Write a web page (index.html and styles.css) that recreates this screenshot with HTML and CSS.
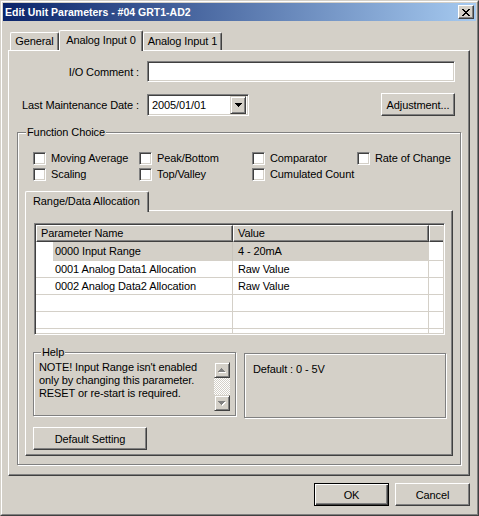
FILE: index.html
```html
<!DOCTYPE html>
<html>
<head>
<meta charset="utf-8">
<title>Edit Unit Parameters</title>
<link rel="stylesheet" href="styles.css">
</head>
<body>
<div class="window">
  <div class="frame">
    <div class="titlebar">
      <span class="title">Edit Unit Parameters - #04 GRT1-AD2</span>
      <span class="close"><svg width="8" height="7" viewBox="0 0 8 7"><path fill="#000" d="M0 0h2v1h-2z M6 0h2v1h-2z M1 1h2v1h-2z M5 1h2v1h-2z M2 2h4v1h-4z M3 3h2v1h-2z M2 4h4v1h-4z M1 5h2v1h-2z M5 5h2v1h-2z M0 6h2v1h-2z M6 6h2v1h-2z"/></svg></span>
    </div>
    <div class="client">
      <div class="tabs">
        <div class="tab t-general">General</div>
        <div class="tab active t-ai0">Analog Input 0</div>
        <div class="tab t-ai1">Analog Input 1</div>
      </div>
      <div class="panel">
        <div class="row row1">
          <span class="lbl">I/O Comment :</span>
          <div class="field comment"></div>
        </div>
        <div class="row row2">
          <span class="lbl">Last Maintenance Date :</span>
          <div class="field combo">
            <span class="combo-text">2005/01/01</span>
            <span class="dd"><svg width="7" height="4" viewBox="0 0 7 4"><path fill="#000" d="M0 0h7v1h-1v1h-1v1h-1v1h-1v-1h-1v-1h-1v-1h-1z"/></svg></span>
          </div>
          <div class="btn adj">Adjustment...</div>
        </div>
        <div class="group func">
          <span class="gtitle">Function Choice</span>
          <div class="checks">
            <div class="ck"><span class="cb"></span><span>Moving Average</span></div>
            <div class="ck"><span class="cb"></span><span>Peak/Bottom</span></div>
            <div class="ck"><span class="cb"></span><span>Comparator</span></div>
            <div class="ck"><span class="cb"></span><span>Rate of Change</span></div>
            <div class="ck"><span class="cb"></span><span>Scaling</span></div>
            <div class="ck"><span class="cb"></span><span>Top/Valley</span></div>
            <div class="ck"><span class="cb"></span><span>Cumulated Count</span></div>
          </div>
          <div class="subtabs">
            <div class="tab active subtab">Range/Data Allocation</div>
          </div>
          <div class="subpanel">
            <div class="field listview">
              <div class="lv-head">
                <div class="hc">Parameter Name</div>
                <div class="hc">Value</div>
                <div class="hc hc3"></div>
              </div>
              <div class="lv-row sel">
                <div class="c1">0000 Input Range</div>
                <div class="c2">4 - 20mA</div>
                <div class="c3"></div>
              </div>
              <div class="lv-row">
                <div class="c1">0001 Analog Data1 Allocation</div>
                <div class="c2">Raw Value</div>
                <div class="c3"></div>
              </div>
              <div class="lv-row">
                <div class="c1">0002 Analog Data2 Allocation</div>
                <div class="c2">Raw Value</div>
                <div class="c3"></div>
              </div>
              <div class="lv-row">
                <div class="c1"></div>
                <div class="c2"></div>
                <div class="c3"></div>
              </div>
              <div class="lv-row">
                <div class="c1"></div>
                <div class="c2"></div>
                <div class="c3"></div>
              </div>
              <div class="lv-row">
                <div class="c1"></div>
                <div class="c2"></div>
                <div class="c3"></div>
              </div>
            </div>
            <div class="bottom">
              <div class="group help">
                <span class="gtitle">Help</span>
                <div class="help-body">
                  <div class="help-text">NOTE! Input Range isn't enabled<br>only by changing this parameter.<br>RESET or re-start is required.</div>
                  <div class="sbar">
                    <span class="sbtn"><svg width="8" height="5" viewBox="0 0 8 5"><path fill="#fff" d="M4 1h1v1h1v1h1v1h1v1h-7v-1h1v-1h1v-1h1z"/><path fill="#808080" d="M3 0h1v1h1v1h1v1h1v1h-7v-1h1v-1h1v-1h1z"/></svg></span>
                    <span class="track"></span>
                    <span class="sbtn"><svg width="8" height="5" viewBox="0 0 8 5"><path fill="#fff" d="M1 1h7v1h-1v1h-1v1h-1v1h-1v-1h-1v-1h-1v-1h-1z"/><path fill="#808080" d="M0 0h7v1h-1v1h-1v1h-1v1h-1v-1h-1v-1h-1v-1h-1z"/></svg></span>
                  </div>
                </div>
              </div>
              <div class="defbox">Default : 0 - 5V</div>
            </div>
            <div class="btn defset">Default Setting</div>
          </div>
        </div>
      </div>
      <div class="actions">
        <div class="btn default">OK</div>
        <div class="btn">Cancel</div>
      </div>
    </div>
  </div>
</div>
</body>
</html>
```

FILE: styles.css
```css
* { box-sizing: border-box; }
html, body { margin: 0; padding: 0; }
body {
  background: #d4d0c8;
  font-family: "Liberation Sans", Arial, sans-serif;
  font-size: 11px;
  letter-spacing: -0.1px;
  color: #000;
}
.window {
  width: 479px;
  height: 516px;
  border: 1px solid;
  border-color: #d4d0c8 #404040 #404040 #d4d0c8;
  background: #d4d0c8;
}
.frame {
  height: 100%;
  border: 1px solid;
  border-color: #fff #808080 #808080 #fff;
  padding: 1px;
  display: flex;
  flex-direction: column;
}
.titlebar {
  height: 18px;
  flex: none;
  display: flex;
  align-items: center;
  padding: 0 2px 0 2px;
  background: linear-gradient(to right, #0a246a, #a6caf0);
}
.title {
  flex: 1;
  color: #fff;
  font-weight: bold;
  font-size: 10.5px;
  letter-spacing: 0;
  line-height: 18px;
  white-space: nowrap;
}
.close {
  width: 16px;
  height: 14px;
  display: flex;
  align-items: center;
  justify-content: center;
  background: #d4d0c8;
  border: 1px solid;
  border-color: #fff #404040 #404040 #fff;
  box-shadow: inset -1px -1px #808080;
}
.client {
  flex: 1;
  display: flex;
  flex-direction: column;
  padding: 9px 6px 0 5px;
}

/* tabs */
.tabs {
  flex: none;
  display: flex;
  align-items: flex-end;
  height: 20px;
  padding-left: 2px;
}
.tab {
  height: 18px;
  border: 1px solid;
  border-bottom: none;
  border-color: #fff #404040 #fff #fff;
  box-shadow: inset -1px 0 #808080;
  border-radius: 2px 2px 0 0;
  background: #d4d0c8;
  text-align: center;
  line-height: 17px;
  white-space: nowrap;
}
.tab.active {
  height: 21px;
  margin-bottom: -1px;
  line-height: 19px;
  position: relative;
  z-index: 1;
}
.t-general { width: 49px; }
.t-ai0 { width: 84px; }
.t-ai1 { width: 79px; }

.panel {
  flex: none;
  height: 426px;
  border: 1px solid;
  border-color: #fff #404040 #404040 #fff;
  box-shadow: inset -1px -1px #808080;
  display: flex;
  flex-direction: column;
}

/* form rows */
.row {
  flex: none;
  display: flex;
  align-items: center;
  padding-right: 14px;
}
.row1 { margin-top: 10px; height: 21px; }
.row2 { margin-top: 11px; height: 23px; }
.lbl {
  flex: none;
  width: 130px;
  margin-right: 8px;
  text-align: right;
  white-space: nowrap;
}
.field {
  border: 1px solid;
  border-color: #808080 #fff #fff #808080;
  box-shadow: inset 1px 1px #404040, inset -1px -1px #d4d0c8;
  background: #fff;
}
.comment { width: 308px; height: 21px; }
.combo {
  width: 102px;
  height: 22px;
  padding: 2px;
  display: flex;
  align-items: center;
}
.combo-text { flex: 1; padding-left: 2px; line-height: 18px; }
.dd {
  width: 16px;
  height: 18px;
  display: flex;
  align-items: center;
  justify-content: center;
  background: #d4d0c8;
  border: 1px solid;
  border-color: #d4d0c8 #404040 #404040 #d4d0c8;
  box-shadow: inset 1px 1px #fff, inset -1px -1px #808080;
}

/* buttons */
.btn {
  display: flex;
  align-items: center;
  justify-content: center;
  background: #d4d0c8;
  border: 1px solid;
  border-color: #fff #404040 #404040 #fff;
  box-shadow: inset -1px -1px #808080;
  white-space: nowrap;
  width: 75px;
  height: 23px;
}
.btn.default {
  border-color: #000;
  box-shadow: inset 1px 1px #fff, inset -1px -1px #404040, inset -2px -2px #808080;
}
.adj { margin-left: auto; width: 74px; }

/* group boxes */
.group {
  border: 1px solid #808080;
  box-shadow: inset 1px 1px #fff, 1px 1px #fff;
  display: flex;
  flex-direction: column;
  flex: none;
}
.gtitle {
  align-self: flex-start;
  margin: -7px 0 0 8px;
  padding: 0 1px;
  line-height: 13px;
  background: #d4d0c8;
  white-space: nowrap;
}
.func {
  margin: 16px 0 0 8px;
  width: 444px;
  height: 333px;
}
.checks {
  display: grid;
  grid-template-columns: 106px 113px 105px auto;
  row-gap: 3px;
  margin: 13px 0 0 15px;
}
.ck {
  display: flex;
  align-items: center;
  gap: 5px;
  height: 13px;
  line-height: 13px;
  white-space: nowrap;
}
.cb {
  flex: none;
  width: 13px;
  height: 13px;
  border: 1px solid;
  border-color: #808080 #fff #fff #808080;
  box-shadow: inset 1px 1px #404040, inset -1px -1px #d4d0c8;
  background: #fff;
}

.subtabs {
  flex: none;
  display: flex;
  align-items: flex-start;
  height: 19px;
  margin: 10px 0 0 7px;
}
.subtab {
  width: 124px;
  height: 20px;
  text-align: left;
  padding-left: 7px;
  line-height: 18px;
}
.subpanel {
  flex: none;
  margin-left: 7px;
  width: 428px;
  height: 246px;
  border: 1px solid;
  border-color: #fff #404040 #404040 #fff;
  box-shadow: inset -1px -1px #808080;
  display: flex;
  flex-direction: column;
}

/* list view */
.listview {
  flex: none;
  margin: 12px 0 0 8px;
  width: 411px;
  height: 112px;
  padding: 1px;
  overflow: hidden;
}
.lv-head, .lv-row {
  display: grid;
  grid-template-columns: 197px 196px 1fr;
}
.lv-head { height: 17px; }
.hc {
  background: #d4d0c8;
  border: 1px solid;
  border-color: #fff #404040 #404040 #fff;
  box-shadow: inset -1px -1px #808080;
  padding-left: 4px;
  line-height: 15px;
  white-space: nowrap;
}
.hc3 { border-right: none; box-shadow: inset 0 -1px #808080; }
.lv-row {
  height: 17px;
  border-bottom: 1px solid #d4d0c8;
  line-height: 16px;
  white-space: nowrap;
}
.lv-row.sel { height: 19px; line-height: 19px; }
.c1 { padding-left: 19px; border-right: 1px solid #d4d0c8; }
.c2 { padding-left: 5px; border-right: 1px solid #d4d0c8; }
.sel .c1 { background: linear-gradient(to right, #fff 17px, #d4d0c8 17px); border-right-color: #c8c4bc; }
.sel .c2 { background: #d4d0c8; }

/* help + default */
.bottom {
  flex: none;
  display: flex;
  align-items: flex-start;
  margin: 17px 0 0 7px;
}
.help {
  width: 203px;
  height: 64px;
}
.help .gtitle { margin-left: 7px; }
.help-body {
  display: flex;
  margin-top: 2px;
}
.help-text {
  flex: 1;
  margin-left: 5px;
  line-height: 13px;
  white-space: nowrap;
}
.sbar {
  flex: none;
  width: 16px;
  margin: 1px 5px 0 0;
  display: flex;
  flex-direction: column;
}
.sbtn {
  width: 16px;
  height: 16px;
  display: flex;
  align-items: center;
  justify-content: center;
  background: #d4d0c8;
  border: 1px solid;
  border-color: #d4d0c8 #404040 #404040 #d4d0c8;
  box-shadow: inset 1px 1px #fff, inset -1px -1px #808080;
}
.track {
  height: 17px;
  background: repeating-conic-gradient(#fff 0 25%, #d4d0c8 0 50%) 0 0 / 2px 2px;
}
.defbox {
  flex: none;
  margin: 1px 0 0 8px;
  width: 202px;
  height: 65px;
  border: 1px solid #808080;
  box-shadow: inset 1px 1px #fff, 1px 1px #fff;
  padding: 9px 0 0 8px;
  line-height: 13px;
}
.defset {
  flex: none;
  margin: 9px 0 0 7px;
  width: 114px;
  height: 23px;
}

.actions {
  flex: none;
  display: flex;
  justify-content: flex-end;
  gap: 6px;
  margin-top: 7px;
}
```
